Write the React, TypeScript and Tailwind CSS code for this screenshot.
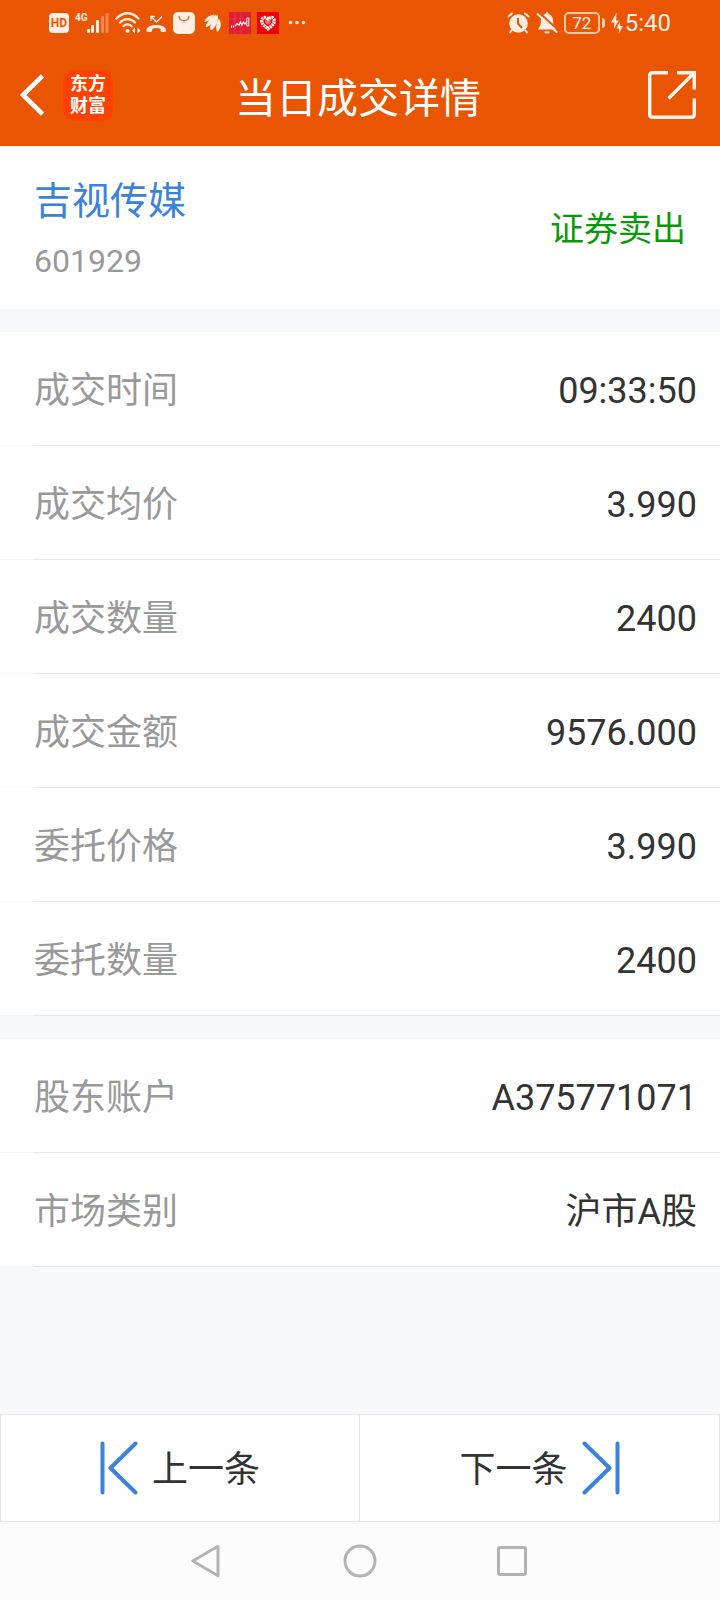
import React from "react";

type Entry = { label: string; value: string };

const tradeEntries: Entry[] = [
  { label: "成交时间", value: "09:33:50" },
  { label: "成交均价", value: "3.990" },
  { label: "成交数量", value: "2400" },
  { label: "成交金额", value: "9576.000" },
  { label: "委托价格", value: "3.990" },
  { label: "委托数量", value: "2400" },
];

const accountEntries: Entry[] = [
  { label: "股东账户", value: "A375771071" },
  { label: "市场类别", value: "沪市A股" },
];

function StatusBar() {
  return (
    <div className="flex h-11 items-center justify-between px-[49px] pt-[2px] text-[#ffeee4]">
      <div className="flex items-center">
        <div className="flex h-5 w-5 items-center justify-center rounded-sm bg-[#ffeee4] text-[12px] leading-5 font-bold text-[#ea5504]">
          HD
        </div>
        <span className="ml-[6px] self-start text-[10px] leading-3 font-bold">4G</span>
        <svg className="-ml-px h-[22px] w-[22px]" viewBox="0 0 22 22" fill="currentColor">
          <rect x="0" y="17" width="3" height="4" rx="1" />
          <rect x="4" y="13" width="3" height="8" rx="1" />
          <rect x="9" y="8" width="3" height="13" rx="1" />
          <rect x="14" y="4" width="3" height="17" rx="1" opacity=".35" />
          <rect x="18.500" y="1" width="3" height="20" rx="1" opacity=".35" />
        </svg>
        <svg className="ml-[6px] h-[22px] w-[26px]" viewBox="0 0 26 22" fill="none" stroke="currentColor" strokeWidth="2.300" strokeLinecap="round">
          <path d="M1.500 6.500C8-.5 17-.5 23.500 6.500M5 10.500c4.500-4.500 10.500-4.500 15 0M8.500 14.200c2.500-2.300 5.500-2.300 8 0" />
          <circle cx="12.500" cy="19" r="2" fill="currentColor" stroke="none" />
          <path d="M17 18.500l3-3v6zM25.500 18.500l-3-3v6z" fill="currentColor" stroke="none" />
        </svg>
        <svg className="ml-[5px] h-[22px] w-[21px]" viewBox="0 0 21 22" fill="none" stroke="currentColor">
          <path d="M5 9V4.500h4M5.500 5l5 5L16 4.500" strokeWidth="1.300" />
          <path d="M.5 19c-1-8 20.500-8 19.500 0-.2 1.500-5.500 1.300-5.500-.2v-2c-2.500-1-5.800-1-8.300 0v2c0 1.500-5.500 1.700-5.700.2z" fill="currentColor" stroke="none" />
        </svg>
        <svg className="ml-[6px] h-[22px] w-[22px]" viewBox="0 0 22 22">
          <rect width="22" height="22" rx="5" fill="currentColor" />
          <path d="M6 4.500c.5 5.500 9.500 5.500 10 0" fill="none" stroke="#ea7a45" strokeWidth="1.500" strokeLinecap="round" />
        </svg>
        <svg className="ml-[9px] h-5 w-[17px]" viewBox="0 0 17 20" fill="currentColor">
          <path d="M.3 8.300C2.500 4.200 6 1.800 11 1.800 8.500 4.500 5.500 7.800 1.300 9c-.6.1-1.100-.2-1-.7z" />
          <path d="M1.800 13c1.700-4.500 5-8.500 10.800-11.500C11.500 6 8 11.500 3.200 14c-.9.4-1.600-.1-1.400-1z" />
          <path d="M6.300 16c-.3-4.500 2.200-10 7.400-14.200C14.700 7 12.700 13 8.200 16.700c-.8.700-1.800.3-1.900-.7z" />
          <path d="M12.800 18c-1.300-3.500-.6-8 2-12.500C17.800 9.500 17.300 14 14.600 18c-.5.7-1.500.8-1.800 0z" />
        </svg>
        <svg className="ml-2 h-[22px] w-[22px]" viewBox="0 0 22 22">
          <rect width="22" height="22" fill="#df2034" />
          <path d="M6 0v22M12 0v22M0 7h22" stroke="#e84558" strokeWidth=".6" />
          <path d="M2.500 13.500v2.500M4.500 13.500v2M6 14.500l2-3 2 1.500 1.500-3 1.500 3 1.500-3L16 12l2-3" fill="none" stroke="#fff" strokeWidth="1.200" />
          <path d="M17.800 6h2v8h-2z" fill="none" stroke="#ffe3e3" />
        </svg>
        <svg className="ml-[6px] h-[22px] w-[22px]" viewBox="0 0 22 22">
          <rect width="22" height="22" fill="#ee0008" />
          <path d="M11 7.500C8.500 4 4.500 5.500 4.800 9.500c.3 3.300 3.700 5.200 6.200 7.300 2.500-2.100 5.900-4 6.200-7.300.3-4-3.700-5.500-6.200-2z" fill="none" stroke="#fff" strokeWidth="3.400" strokeDasharray="2 .7" />
          <path d="M11 13c-2-1.500-3-2.300-3-3.600 0-1.500 2-1.900 3-.4 1-1.500 3-1.100 3 .4 0 1.300-1 2.100-3 3.600z" fill="#f66" />
        </svg>
        <svg className="ml-[9px] h-[22px] w-[18px]" viewBox="0 0 18 22" fill="currentColor">
          <circle cx="2.500" cy="10.500" r="1.700" />
          <circle cx="9" cy="10.500" r="1.700" />
          <circle cx="15.500" cy="10.500" r="1.700" />
        </svg>
      </div>
      <div className="flex items-center">
        <svg className="h-[22px] w-[23px]" viewBox="0 0 23 22" fill="none" stroke="currentColor">
          <circle cx="11.500" cy="11.500" r="9.300" fill="currentColor" stroke="none" />
          <path d="M1.500 4.500L5 1.500M21.500 4.500L18 1.500M4.500 18.500l-1.500 2M18.500 18.500l1.500 2" strokeWidth="2" strokeLinecap="round" />
          <path d="M11 6v5.500l4 4.500" stroke="#ea5504" strokeWidth="2" />
        </svg>
        <svg className="ml-[6px] h-[22px] w-[22px]" viewBox="0 0 22 22">
          <path d="M9.500 2c0-2.500 3-2.500 3 0 3.500 1 4.700 4 4.700 8 0 3.500 1 4.500 3 7.500H1.800c2-3 3-4 3-7.500 0-4 1.200-7 4.700-8zM8 19.500h6c-.6 2.600-5.400 2.600-6 0z" fill="currentColor" />
          <path d="M3.300.8L22 17.800" stroke="#ea5504" strokeWidth="2" />
          <path d="M1.500 2L20.500 20" stroke="currentColor" strokeWidth="2" strokeLinecap="round" />
        </svg>
        <div className="ml-[6px] flex h-[22px] w-9 items-center justify-center rounded-[5px] border-2 border-[#ffc9a8] text-[17px] leading-5">
          72
        </div>
        <div className="ml-[2px] h-[10px] w-[3px] rounded-r-sm bg-[#ffc9a8]" />
        <svg className="ml-[6px] h-[22px] w-3" viewBox="0 0 12 22" fill="currentColor">
          <path d="M5.500.5L0 10.500h3.300L2.800 17l5-8.500H5.200zM9 9.500l-3.500 7h2.700l-.7 5.500 4.500-8H9z" />
        </svg>
        <span className="ml-[2px] text-2xl leading-7">5:40</span>
      </div>
    </div>
  );
}

function Header() {
  return (
    <header className="bg-[#ea5504] text-white">
      <StatusBar />
      <div className="grid h-[102px] grid-cols-[1fr_auto_1fr] items-center pr-6 pl-5">
        <div className="flex items-center">
          <button type="button" aria-label="返回" className="h-[42px] w-6">
            <svg className="h-[42px] w-6" viewBox="0 0 24 42" fill="none" stroke="currentColor" strokeWidth="4.600">
              <path d="M22.500 2L3 21l19.500 19" />
            </svg>
          </button>
          <div className="ml-[19px] flex h-[51px] w-[50px] flex-col items-center justify-center rounded-[10px] bg-[#ff4200] text-[18px] leading-[22px] font-bold">
            <span>东方</span>
            <span>财富</span>
          </div>
        </div>
        <h1 className="pt-2 text-[41px] leading-[50px]">当日成交详情</h1>
        <button type="button" aria-label="分享" className="h-12 w-12 justify-self-end">
          <svg className="h-12 w-12" viewBox="0 0 48 48" fill="none" stroke="#fff5ec" strokeWidth="3.400">
            <path d="M20 1.700H4a2.300 2.300 0 0 0-2.300 2.300v40A2.300 2.300 0 0 0 4 46.300h40a2.300 2.300 0 0 0 2.300-2.300V27.500" />
            <path d="M29 1.700h17.300V18.500M46 2L20.500 27.500" />
          </svg>
        </button>
      </div>
    </header>
  );
}

function EntryList({ entries }: { entries: Entry[] }) {
  return (
    <dl>
      {entries.map((entry) => (
        <div key={entry.label}>
          <div className="flex h-[113px] items-center justify-between bg-white pt-1 pr-[23px] pl-[34px] text-4xl">
            <dt className="text-[#999999]">{entry.label}</dt>
            <dd className="text-[#333333]">{entry.value}</dd>
          </div>
          <div className="ml-[34px] h-px bg-[#e8e8ea]" />
        </div>
      ))}
    </dl>
  );
}

function StepIcon({ flipped = false }: { flipped?: boolean }) {
  return (
    <svg className="h-[54px] w-[38px]" viewBox="0 0 38 54" fill="none" stroke="#3b82db" strokeWidth="4" strokeLinecap="round" strokeLinejoin="round">
      {flipped ? <path d="M35.500 2.500v49M2.500 2.500L27.500 27l-25 24.500" /> : <path d="M2.500 2.500v49M35.500 2.500L10.500 27l25 24.500" />}
    </svg>
  );
}

export default function App() {
  return (
    <div className="flex min-h-screen flex-col bg-[#f6f8fa] font-[Roboto,'Noto_Sans_CJK_SC',sans-serif]">
      <Header />
      <main className="flex flex-col gap-[23px]">
        <section className="flex items-center justify-between bg-white px-[34px] pt-[33px] pb-[30px]">
          <div className="flex flex-col gap-5">
            <h2 className="text-[38px] leading-[44px] text-[#3b82db]">吉视传媒</h2>
            <p className="text-[32px] leading-9 text-[#999999]">601929</p>
          </div>
          <p className="text-[34px] leading-10 text-[#0a990a]">证券卖出</p>
        </section>
        <EntryList entries={tradeEntries} />
        <EntryList entries={accountEntries} />
      </main>
      <footer className="mt-auto">
        <div className="grid grid-cols-2 bg-white text-4xl text-[#333333]">
          <button type="button" className="flex h-[108px] items-center justify-center gap-[14px] border border-[#e8e8ea]">
            <StepIcon />
            <span className="pt-1">上一条</span>
          </button>
          <button type="button" className="flex h-[108px] items-center justify-center gap-[14px] border border-l-0 border-[#e8e8ea]">
            <span className="pt-1">下一条</span>
            <StepIcon flipped />
          </button>
        </div>
        <nav className="flex h-[78px] items-center justify-center gap-[120px] bg-[#fcfcfc] text-[#b3b3b3]">
          <button type="button" aria-label="后退">
            <svg className="h-[34px] w-8" viewBox="0 0 32 34" fill="none" stroke="currentColor" strokeWidth="3" strokeLinejoin="round">
              <path d="M27 2.200v29.600L1.800 17z" />
            </svg>
          </button>
          <button type="button" aria-label="主屏幕">
            <svg className="h-[34px] w-[34px]" viewBox="0 0 34 34" fill="none" stroke="currentColor" strokeWidth="3">
              <circle cx="17" cy="17" r="15" />
            </svg>
          </button>
          <button type="button" aria-label="最近任务">
            <svg className="h-[34px] w-8" viewBox="0 0 32 34" fill="none" stroke="currentColor" strokeWidth="3">
              <rect x="1.500" y="3.500" width="27" height="27" rx="1.500" />
            </svg>
          </button>
        </nav>
      </footer>
    </div>
  );
}
